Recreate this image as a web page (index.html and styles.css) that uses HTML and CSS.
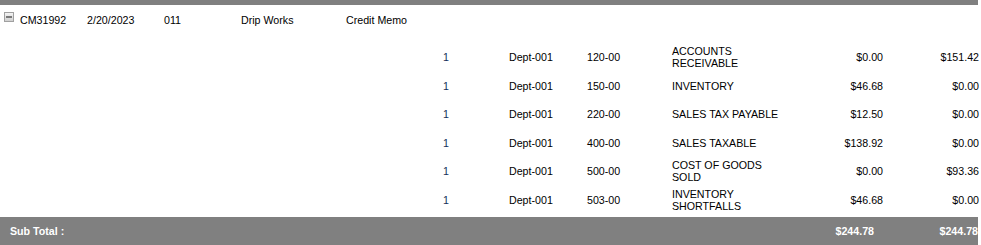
FILE: index.html
```html
<!DOCTYPE html>
<html>
<head>
<meta charset="utf-8">
<link rel="stylesheet" href="styles.css">
</head>
<body>
<div class="report">
  <div class="topbar"></div>
  <div class="head-row">
    <span class="toggle"><span class="minus"></span></span>
    <span>CM31992</span>
    <span>2/20/2023</span>
    <span>011</span>
    <span>Drip Works</span>
    <span>Credit Memo</span>
  </div>
  <div class="details">
    <div class="line"><span></span><span class="qty">1</span><span>Dept-001</span><span>120-00</span><span class="desc">ACCOUNTS RECEIVABLE</span><span class="amt">$0.00</span><span class="amt last">$151.42</span></div>
    <div class="line"><span></span><span class="qty">1</span><span>Dept-001</span><span>150-00</span><span class="desc">INVENTORY</span><span class="amt">$46.68</span><span class="amt last">$0.00</span></div>
    <div class="line"><span></span><span class="qty">1</span><span>Dept-001</span><span>220-00</span><span class="desc">SALES TAX PAYABLE</span><span class="amt">$12.50</span><span class="amt last">$0.00</span></div>
    <div class="line"><span></span><span class="qty">1</span><span>Dept-001</span><span>400-00</span><span class="desc">SALES TAXABLE</span><span class="amt">$138.92</span><span class="amt last">$0.00</span></div>
    <div class="line"><span></span><span class="qty">1</span><span>Dept-001</span><span>500-00</span><span class="desc">COST OF GOODS SOLD</span><span class="amt">$0.00</span><span class="amt last">$93.36</span></div>
    <div class="line"><span></span><span class="qty">1</span><span>Dept-001</span><span>503-00</span><span class="desc">INVENTORY SHORTFALLS</span><span class="amt">$46.68</span><span class="amt last">$0.00</span></div>
  </div>
  <div class="subtotal">
    <span class="sub-label">Sub Total :</span>
    <span class="sub-debit">$244.78</span>
    <span class="sub-credit">$244.78</span>
  </div>
</div>
</body>
</html>
```
FILE: styles.css
```css
html, body {
  margin: 0;
  padding: 0;
  background: #ffffff;
}
body {
  font-family: "Liberation Sans", Arial, sans-serif;
  font-size: 8pt;
  color: #000000;
}
.report {
  width: 978px;
}
.topbar {
  height: 5px;
  background: #808080;
}
.head-row {
  display: grid;
  grid-template-columns: 20px 67px 77px 77px 105px auto;
  padding-top: 9px;
  height: 29px;
  line-height: 13px;
}
.toggle {
  display: block;
  width: 8px;
  height: 8px;
  margin: -2px 0 0 4px;
  border: 1px solid #a0a0a0;
  background: linear-gradient(#f4f4f4, #d0d0d0);
  position: relative;
}
.minus {
  position: absolute;
  left: 1px;
  right: 1px;
  top: 3px;
  height: 2px;
  background: #7a7a7a;
}
.details {
  padding-top: 0;
}
.line {
  display: grid;
  grid-template-columns: 443px 66px 78px 85px 118px 95px 93px;
  height: 28.5px;
  align-items: center;
  line-height: 12px;
}
.qty {
  color: #14305a;
}
.desc {
  padding-right: 3px;
}
.amt {
  text-align: right;
  padding-right: 2px;
}
.amt.last {
  padding-right: 0;
  margin-right: -1px;
}
.subtotal {
  margin-top: 3px;
  height: 28px;
  background: #808080;
  color: #ffffff;
  font-weight: bold;
  display: flex;
  align-items: center;
}
.sub-label {
  flex: 1;
  padding-left: 10px;
}
.sub-debit {
  width: 90px;
  text-align: right;
}
.sub-credit {
  width: 104px;
  text-align: right;
}
```
